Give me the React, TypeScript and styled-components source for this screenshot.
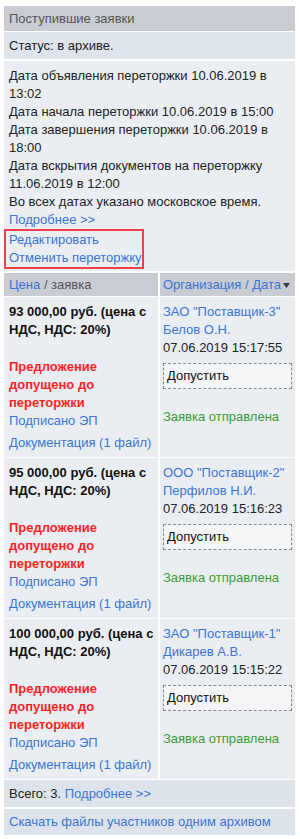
import React from "react";
import styled, { createGlobalStyle } from "styled-components";

const Global = createGlobalStyle`
  html, body { margin: 0; padding: 0; background: #fff; }
  body { font-family: "Liberation Sans", Arial, sans-serif; font-size: 13px; line-height: 18px; color: #222; }
`;

const Page = styled.div`
  width: 291px;
  margin: 6px 5px 0 4px;
`;

const Title = styled.div`
  height: 25px;
  line-height: 25px;
  background: #c9cdd3;
  color: #555;
  padding-left: 5px;
`;

const Status = styled.div`
  margin-top: 1px;
  height: 27px;
  line-height: 27px;
  background: #dee4eb;
  padding-left: 5px;
`;

const Info = styled.div`
  margin-top: 2px;
  background: #eaeef3;
  padding: 6px 5px 2px;
`;

const Link = styled.a`
  color: #3b74d4;
  text-decoration: none;
  cursor: pointer;
`;

const Block = styled.div`
  display: block;
`;

const Highlight = styled.div`
  margin-left: -5px;
  width: 133px;
  border: 2px solid #f0404c;
  padding: 0 0 0 3px;
`;

const Grid = styled.div`
  margin-top: 2px;
  display: grid;
  grid-template-columns: 154px 135px;
  column-gap: 2px;
  row-gap: 1px;
`;

const HeadCell = styled.div`
  height: 23px;
  line-height: 23px;
  background: #c9cdd3;
  color: #555;
  padding-left: ${(p: { $pad: number }) => p.$pad}px;
  white-space: nowrap;
`;

const SortArrow = styled.svg`
  margin-left: 2px;
  vertical-align: 1px;
`;

const LeftCell = styled.div`
  background: #eaeef3;
  padding: 6px 1px 5px 5px;
`;

const RightCell = styled.div`
  background: #eaeef3;
  padding: 6px 3px 5px 3px;
`;

const Price = styled.div`
  font-weight: bold;
  color: #111;
`;

const Admitted = styled.div`
  margin-top: 19px;
  font-weight: bold;
  color: #ff1f1f;
  padding-right: 4px;
`;

const DocLink = styled(Link)`
  display: block;
  margin-top: 4px;
`;

const Line = styled.div`
  white-space: nowrap;
`;

const AdmitBox = styled.div`
  margin-top: 6px;
  width: 124px;
  height: 24px;
  line-height: 24px;
  border: 1px dashed #8a8a8a;
  background: #f4f5f7;
  padding-left: 3px;
  color: #111;
`;

const Sent = styled.div`
  margin-top: 19px;
  color: #3c9a34;
`;

const Footer = styled.div<{ $top: number; $h: number }>`
  margin-top: ${(p) => p.$top}px;
  height: ${(p) => p.$h}px;
  line-height: ${(p) => p.$h}px;
  background: #dde3ea;
  padding-left: 5px;
`;

const bids = [
  { price: "93 000,00 руб. (цена с НДС, НДС: 20%)", org: 'ЗАО "Поставщик-3"', person: "Белов О.Н.", date: "07.06.2019 15:17:55" },
  { price: "95 000,00 руб. (цена с НДС, НДС: 20%)", org: 'ООО "Поставщик-2"', person: "Перфилов Н.И.", date: "07.06.2019 15:16:23" },
  { price: "100 000,00 руб. (цена с НДС, НДС: 20%)", org: 'ЗАО "Поставщик-1"', person: "Дикарев А.В.", date: "07.06.2019 15:15:22" },
];

export default function App() {
  return (
    <>
      <Global />
      <Page>
        <Title>Поступившие заявки</Title>
        <Status>Статус: в архиве.</Status>
        <Info>
          <Block>Дата объявления переторжки 10.06.2019 в 13:02</Block>
          <Block>Дата начала переторжки 10.06.2019 в 15:00</Block>
          <Block>Дата завершения переторжки 10.06.2019 в 18:00</Block>
          <Block>Дата вскрытия документов на переторжку 11.06.2019 в 12:00</Block>
          <Block>Во всех датах указано московское время.</Block>
          <Block><Link>Подробнее &gt;&gt;</Link></Block>
          <Highlight>
            <Block><Link>Редактировать</Link></Block>
            <Block><Link>Отменить переторжку</Link></Block>
          </Highlight>
        </Info>
        <Grid>
          <HeadCell $pad={5}><Link>Цена</Link> / заявка</HeadCell>
          <HeadCell $pad={3}>
            <Link>Организация / Дата</Link>
            <SortArrow width="7" height="5" viewBox="0 0 7 5"><path d="M0 0H7L3.5 5Z" fill="#2d3e4e" /></SortArrow>
          </HeadCell>
          {bids.map((b) => (
            <React.Fragment key={b.org}>
              <LeftCell>
                <Price>{b.price}</Price>
                <Admitted>Предложение допущено до переторжки</Admitted>
                <Link>Подписано ЭП</Link>
                <DocLink>Документация (1 файл)</DocLink>
              </LeftCell>
              <RightCell>
                <Line><Link>{b.org}</Link></Line>
                <Line><Link>{b.person}</Link></Line>
                <Line>{b.date}</Line>
                <AdmitBox>Допустить</AdmitBox>
                <Sent>Заявка отправлена</Sent>
              </RightCell>
            </React.Fragment>
          ))}
        </Grid>
        <Footer $top={1} $h={27}>Всего: 3. <Link>Подробнее &gt;&gt;</Link></Footer>
        <Footer $top={2} $h={26}><Link>Скачать файлы участников одним архивом</Link></Footer>
      </Page>
    </>
  );
}
